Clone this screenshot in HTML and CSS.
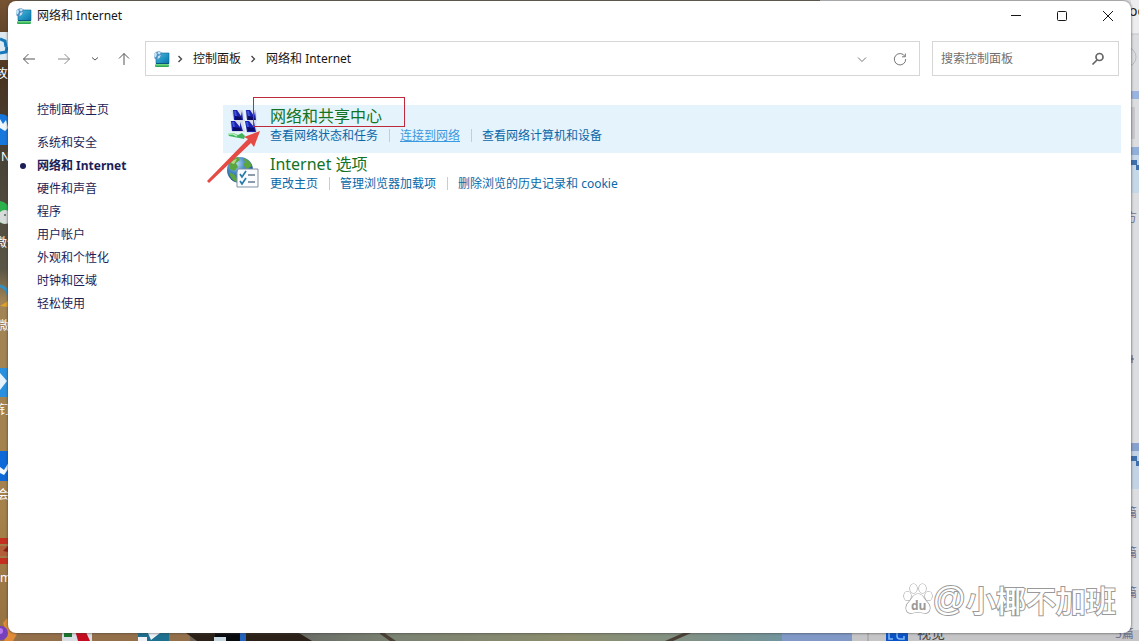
FILE: index.html
```html
<!DOCTYPE html>
<html lang="zh-CN">
<head>
<meta charset="utf-8">
<title>网络和 Internet</title>
<link rel="stylesheet" href="styles.css">
</head>
<body>
<svg class="defs" width="0" height="0" aria-hidden="true">
  <defs>
    <linearGradient id="screen" x1="0" y1="0" x2="1" y2="1"><stop offset="0" stop-color="#45bfdd"/><stop offset="1" stop-color="#0873ae"/></linearGradient>
    <linearGradient id="base" x1="0" y1="0" x2="0" y2="1"><stop offset="0" stop-color="#7ee28f"/><stop offset="1" stop-color="#1d9c45"/></linearGradient>
    <symbol id="net" viewBox="0 0 16 16">
      <rect x="1" y="13" width="14" height="3" rx="1" fill="url(#base)"/>
      <path d="M2 2h13v10.500H2z" fill="url(#screen)" stroke="#0b6796" stroke-width=".6"/>
      <path d="M2 12h13v1H2z" fill="#0b567e"/>
      <path d="M0 3Q2-.5 6 .5L8 2 7 6 3.500 9 .5 7.500z" fill="#4d8fc4"/>
      <path d="M0 3L2 1l1 2.500L2 6 .5 6.500zM4 .5l3 1-1.500 2-2-1zM4 5l3-1-1.500 3-2 1z" fill="#c4e3f4"/>
    </symbol>
  </defs>
</svg>

<svg class="wallpaper" viewBox="0 0 1139 641" preserveAspectRatio="none" aria-hidden="true">
  <defs>
    <linearGradient id="left" x1="0" y1="0" x2="0" y2="1"><stop offset="0" stop-color="#765332"/><stop offset=".12" stop-color="#49331f"/><stop offset=".26" stop-color="#4a4438"/><stop offset=".42" stop-color="#5a5645"/><stop offset=".47" stop-color="#a18455"/><stop offset=".8" stop-color="#a5814b"/><stop offset="1" stop-color="#95713f"/></linearGradient>
    <linearGradient id="bottom" x1="0" y1="0" x2="1" y2="0"><stop offset="0" stop-color="#686b65"/><stop offset=".2" stop-color="#7a8272"/><stop offset=".55" stop-color="#8c8d6d"/><stop offset=".8" stop-color="#809187"/><stop offset="1" stop-color="#7095a0"/></linearGradient>
  </defs>
  <rect width="1139" height="641" fill="#6e6455"/>
  <rect width="20" height="641" fill="url(#left)"/>
  <rect x="820" width="319" height="641" fill="#dcdde0"/>
  <rect x="0" y="628" width="190" height="13" fill="#94704a"/>
  <path d="M182 630h125l14 11H197z" fill="#2c2118"/>
  <path d="M294 630h500v11H312z" fill="url(#bottom)"/>
  <path d="M380 630l16 11h-6l-10-7zM698 630l-25 11h-8l25-11z" fill="#493f35"/>
  <path d="M62 630h30v11H62z" fill="#dadde4"/><path d="M64 630h8v7h-8z" fill="#17782d"/><path d="M75 630h10l5 11H78z" fill="#c60c20"/>
  <path d="M138 630h31v11h-31z" fill="#1d7090"/><path d="M138 637h9v4h-9zM148 633h12l-9 7z" fill="#eef2f7"/>
  <path d="M215 630h25v11h-25z" fill="#080b0e"/><path d="M214 637h12v4h-12z" fill="#c7d7e0"/><path d="M240 630h6v11h-6z" fill="#2263bd"/>
  <rect x="782" y="630" width="70" height="11" fill="#8199c7"/>
  <rect x="852" y="630" width="287" height="11" fill="#c5c5c7"/><path d="M868 630v11" stroke="#999"/>
  <rect x="886" y="630" width="22" height="11" fill="#0a54c8"/><path d="M889 633v6h4M897 633v3q0 3 3 3h4v-3" fill="none" stroke="#83b6f4" stroke-width="1.500"/>

  <rect y="32" width="9" height="28" fill="#dce9f1"/><path d="M0 39l5 2 1 6M0 53l6-1 1-5" fill="none" stroke="#1478bd" stroke-width="3"/>
  <path d="M0 114q9 0 9 7v24H0z" fill="#1677dd"/><path d="M0 119l3 5 3-4 2 8-3 3-5-3z" fill="#eef6fc"/>
  <circle cx="-1" cy="212" r="11" fill="#2cb34e"/><circle cx="5" cy="217" r="7" fill="#d7dcda"/><circle cx="5" cy="215" r="1" fill="#516358"/>
  <path d="M0 286q9 2 9 15" fill="none" stroke="#3490c2" stroke-width="3"/><path d="M0 306l8-5v6z" fill="#e0a22c"/>
  <rect y="368" width="9" height="29" fill="#2890df"/><path d="M0 373l7 8-7 9z" fill="#e6f3fd"/>
  <rect y="451" width="9" height="30" fill="#0d68d8"/><path d="M0 467l4 3 5-8v6l-5 7-4-2z" fill="#f2f8ff"/>
  <path d="M0 538h9v6H0zM0 558h9v6H0z" fill="#c52f20"/><path d="M0 546h9v10H0z" fill="#b35d38"/><path d="M3 551l5-5v6z" fill="#8e1c13"/>
  <path d="M3 623l4-5 5 12-5 4zM8 631l9 3-4 7H4z" fill="#df8b38"/><circle cx="1" cy="633" r="7" fill="#7640bd"/><circle cx="0" cy="631" r="3" fill="#b779ed"/>

  <rect x="1131" y="0" width="8" height="34" fill="#ededef"/><path d="M1131 34h8" stroke="#c5c5c7"/>
  <circle cx="1126" cy="57" r="10" fill="none" stroke="#b9bbc0"/>
  <rect x="1131" y="91" width="8" height="8" fill="#99b5df"/><path d="M1131 107h4v32h-4z" fill="#c8c8ce"/>
  <rect x="1131" y="147" width="8" height="8" fill="#91afd8"/><rect x="1131" y="155" width="8" height="38" fill="#c6d7e8"/><path d="M1131 160h6v5h3v5h-4v-5h-5z" fill="#3f6fac"/>
  <rect x="1131" y="443" width="8" height="8" fill="#87a2cf"/><rect x="1131" y="451" width="8" height="38" fill="#c3d3e5"/><path d="M1131 456h6v5h3v5h-4v-5h-5z" fill="#3f6fac"/>
  <path d="M1131 359h3M1132 355v8" stroke="#4c587c"/>
  <g class="desk-label"><text x="-4" y="78">攻</text><text x="1" y="161">N</text><text x="-5" y="247">微信</text><text x="-3" y="330">微</text><text x="-1" y="414">钉</text><text x="-3" y="499">会</text><text x="0" y="582">m</text></g>
  <g class="page-label"><text x="1125" y="222">方</text><text x="1125" y="517">篇</text><text x="1125" y="557">篇</text><text x="1125" y="597">篇</text><text x="1115" y="638">5篇</text></g>
  <text class="page-big" x="1129" y="16">oc</text><text class="page-view" x="917" y="638">视觉</text>
</svg>

<div class="window">
  <header class="titlebar">
    <svg class="app-icon"><use href="#net"/></svg>
    <h1>网络和 Internet</h1>
    <div class="caption-buttons">
      <button aria-label="最小化"><svg viewBox="0 0 12 12"><path d="M1 5.500h10"/></svg></button>
      <button aria-label="最大化"><svg viewBox="0 0 12 12"><rect x="1.500" y="1.500" width="9" height="9" rx="1"/></svg></button>
      <button aria-label="关闭"><svg viewBox="0 0 12 12"><path d="M1 1l10 10M11 1L1 11"/></svg></button>
    </div>
  </header>

  <div class="toolbar">
    <nav class="history" aria-label="导航">
      <button aria-label="后退"><svg viewBox="0 0 14 14"><path d="M13 7H1.500M6.500 2l-5 5 5 5"/></svg></button>
      <button class="dim" aria-label="前进"><svg viewBox="0 0 14 14"><path d="M1 7h11.500M7.500 2l5 5-5 5"/></svg></button>
      <button class="recent" aria-label="最近位置"><svg viewBox="0 0 14 14"><path d="M4 5.500l3 2.500 3-2.500"/></svg></button>
      <button aria-label="上移"><svg viewBox="0 0 14 14"><path d="M7 13V1.500M2 6.500l5-5 5 5"/></svg></button>
    </nav>
    <div class="address">
      <svg class="app-icon"><use href="#net"/></svg>
      <svg class="crumb-arrow" viewBox="0 0 6 8"><path d="M1.500 1l3 3-3 3"/></svg>
      <a href="#panel">控制面板</a>
      <svg class="crumb-arrow" viewBox="0 0 6 8"><path d="M1.500 1l3 3-3 3"/></svg>
      <a href="#network">网络和 Internet</a>
      <div class="address-actions">
        <button aria-label="展开"><svg viewBox="0 0 14 14"><path d="M3 5.500l4 4 4-4"/></svg></button>
        <button aria-label="刷新"><svg viewBox="0 0 14 14"><path d="M12 4.500A5.700 5.700 0 1 0 12.700 7M12.300 1.500v3.300H9"/></svg></button>
      </div>
    </div>
    <form class="search">
      <input type="search" aria-label="搜索控制面板" placeholder="搜索控制面板">
      <button type="button" aria-label="搜索"><svg viewBox="0 0 14 14"><circle cx="8.500" cy="5" r="3.500"/><path d="M6 8l-4.500 4.500"/></svg></button>
    </form>
  </div>

  <div class="body">
    <nav class="sidebar" aria-label="类别">
      <a class="home" href="#panel">控制面板主页</a>
      <a href="#system">系统和安全</a>
      <a class="current" href="#network" aria-current="page">网络和 Internet</a>
      <a href="#hardware">硬件和声音</a>
      <a href="#programs">程序</a>
      <a href="#users">用户帐户</a>
      <a href="#appearance">外观和个性化</a>
      <a href="#clock">时钟和区域</a>
      <a href="#access">轻松使用</a>
    </nav>
    <main class="content">
      <section class="category active">
        <svg class="category-icon" viewBox="0 0 34 34" aria-hidden="true">
          <path d="M5 3h12l2 11H8zM19 3h11l1 11H21zM4 14h13l2 11H6zM19 14h11l1 12H21z" fill="#d5dbe8"/>
          <path d="M7 3l4 0 4 6 1-5 1 9H8zM20 3l4 0 4 6 1-5 1 9h-9zM5 14l4 0 5 6 0-5 3 9H6zM19 14l4 0 5 6 0-5 2 10h-9z" fill="#1c20ae"/>
          <path d="M9 9l6 1 1 3H9zM22 9l6 1 1 3h-7zM7 20l7 1 2 3H7zM21 20l7 1 1 3h-7z" fill="#0a0b62"/>
          <path d="M8 4l2 0 1 5-2 0zM21 4l2 0 1 5-2 0zM6 15l2 0 1 5-2 0zM20 15l2 0 1 5-2 0z" fill="#3956d8"/>
          <path d="M2 27l5-1 5 2 4-2 3 3-1 3-5-1-5-1-5-1z" fill="#3fb45b"/><path d="M2 27l5 0 4 2" stroke="#b5edbb" stroke-width="1.500" fill="none"/>
        </svg>
        <div>
          <h2><a href="#center">网络和共享中心</a></h2>
          <ul class="tasks"><li><a href="#status">查看网络状态和任务</a></li><li><a class="hover" href="#connect">连接到网络</a></li><li><a href="#devices">查看网络计算机和设备</a></li></ul>
        </div>
      </section>
      <section class="category">
        <svg class="category-icon" viewBox="0 0 34 34" aria-hidden="true">
          <defs><radialGradient id="globe" cx=".35" cy=".25" r=".8"><stop offset="0" stop-color="#b8dcf4"/><stop offset=".45" stop-color="#4587c5"/><stop offset="1" stop-color="#123f7b"/></radialGradient></defs>
          <circle cx="14" cy="15" r="13" fill="url(#globe)"/>
          <path d="M3 9q3-6 9-7l2 3-4 3 2 4-4 4-4-2zM17 3q7 2 9 8l-5 3-4-4 2-3zM3 17l6 3 3 6-2 1q-6-3-7-10z" fill="#5ba640"/>
          <path d="M5 8q3-4 6-4l-3 5z" fill="#b4da82"/>
          <path d="M12 14h20v18H11V17z" fill="#fafcff" stroke="#8192a5"/>
          <path d="M22 20h7M22 27h7" stroke="#687a91" stroke-width="1.500"/>
          <path d="M14 19l2 3 4-6M14 26l2 3 4-6" fill="none" stroke="#277ba7" stroke-width="1.700"/>
        </svg>
        <div>
          <h2><a href="#options">Internet 选项</a></h2>
          <ul class="tasks"><li><a href="#homepage">更改主页</a></li><li><a href="#addons">管理浏览器加载项</a></li><li><a href="#history">删除浏览的历史记录和 cookie</a></li></ul>
        </div>
      </section>
    </main>
  </div>
  <div class="highlight-box"></div>
  <svg class="highlight-arrow" viewBox="0 0 56 56" aria-hidden="true"><path d="M1 52L42 10 38 8 54 2 48 18 45 14 3 54z" fill="#e64a45"/></svg>
  <div class="watermark">
    <svg viewBox="0 0 30 32" aria-hidden="true"><g fill="#fff" stroke="#999" stroke-width="1.200"><ellipse cx="4.500" cy="13" rx="3.500" ry="4.500"/><ellipse cx="10.500" cy="5.500" rx="3.500" ry="4.500"/><ellipse cx="19.500" cy="5.500" rx="3.500" ry="4.500"/><ellipse cx="25.500" cy="13" rx="3.500" ry="4.500"/><path d="M15 11c5 0 6 5 9 8 5 5 3 12-3 11-4-1-8-1-12 0-6 1-8-6-3-11 3-3 4-8 9-8z"/></g><text x="8" y="27">du</text></svg>
    <span class="at">@</span><span>小椰不加班</span>
  </div>
</div>
</body>
</html>
```
FILE: styles.css
```css
* { box-sizing: border-box; }

body {
  margin: 0;
  min-height: 100vh;
  padding: 1px 8px 8px;
  display: flex;
  position: relative;
  overflow: hidden;
  font: 12px/16px "Noto Sans", "Noto Sans CJK SC", sans-serif;
  color: #161616;
}

a { color: inherit; text-decoration: none; }
h1, h2, ul { margin: 0; padding: 0; font-size: inherit; font-weight: 400; }
button { border: 0; padding: 0; background: none; color: inherit; display: grid; place-items: center; }
button svg { width: 14px; height: 14px; fill: none; stroke: currentColor; }

.defs { position: absolute; }
.wallpaper { position: absolute; inset: 0; width: 100%; height: 100%; }
.desk-label { font-size: 12px; fill: #fff; }
.page-label { font-size: 12px; fill: #6c7390; }
.page-big { font-size: 14px; fill: #222; }
.page-view { font-size: 14px; fill: #444; }

.window {
  position: relative;
  flex: 1;
  min-width: 0;
  display: flex;
  flex-direction: column;
  background: #fff;
  border-radius: 8px;
  box-shadow: 0 0 2px 1px rgba(60, 60, 60, .45);
}

.titlebar { display: flex; align-items: center; height: 30px; padding-left: 8px; gap: 5px; }
.app-icon { width: 16px; height: 16px; flex: none; }
.caption-buttons { display: flex; margin-left: auto; }
.caption-buttons button { width: 46px; height: 28px; }
.caption-buttons svg { width: 12px; height: 12px; }

.toolbar { display: flex; align-items: stretch; margin-top: 10px; padding: 0 12px 0 8px; height: 35px; }
.history { display: flex; align-items: center; width: 129px; gap: 10px; padding-left: 6px; color: #555; }
.history button { width: 14px; height: 24px; }
.history button + button { margin-left: 11px; }
.history .recent { margin-left: 7px; }
.history .recent + button { margin-left: 5px; }
.history .dim { color: #8a8a8a; }
.address, .search { display: flex; align-items: center; border: 1px solid #d6d6d6; }
.address { flex: 1; padding: 0 8px; }
.crumb-arrow { width: 6px; height: 8px; margin: 0 10px 0 7px; fill: none; stroke: #444; stroke-width: 1.3; }
.address a + .crumb-arrow { margin-left: 9px; }
.address-actions { display: flex; gap: 16px; margin-left: auto; color: #777; }
.address-actions button { width: 22px; height: 24px; }
.search { width: 187px; margin-left: 12px; padding: 0 13px 0 8px; }
.search input { flex: 1; min-width: 0; border: 0; padding: 0; outline: 0; background: none; font: inherit; color: #222; }
.search input::placeholder { color: #6f6f6f; opacity: 1; }
.search button { color: #666; }
.search button svg { stroke-width: 1.7; }

.body { display: flex; flex: 1; padding: 22px 10px 0 29px; }
.sidebar { width: 186px; flex: none; display: flex; flex-direction: column; align-items: flex-start; color: #1b1e57; }
.sidebar a { line-height: 23px; }
.sidebar .home { margin-bottom: 10px; }
.sidebar .current { position: relative; font-weight: 700; }
.sidebar .current::before {
  content: "";
  position: absolute;
  left: -17px;
  top: 9px;
  width: 6px;
  height: 6px;
  border-radius: 50%;
  background: #1b1e57;
}

.content { flex: 1; min-width: 0; padding-top: 7px; }
.category { display: flex; gap: 10px; height: 48px; padding-left: 3px; }
.category.active { background: #e5f3fc; }
.category-icon { width: 34px; height: 34px; margin-top: 2px; flex: none; }
.category h2 { font-size: 16px; line-height: 22px; color: #127325; }
.tasks { display: flex; list-style: none; color: #0a67a8; line-height: 18px; }
.tasks li + li { margin-left: 11px; padding-left: 11px; background: linear-gradient(#c4ced8, #c4ced8) 0 2px / 1px 13px no-repeat; }
.tasks .hover { color: #3b9ade; text-decoration: underline; }

.highlight-box { position: absolute; left: 245px; top: 96px; width: 152px; height: 30px; border: 1px solid #bd2b3b; }
.highlight-arrow { position: absolute; left: 198px; top: 128px; width: 56px; height: 56px; }

.watermark {
  position: absolute;
  right: 15px;
  bottom: 14px;
  display: flex;
  align-items: center;
  font: 500 30px/40px "Noto Sans CJK SC", sans-serif;
  color: #fff;
  -webkit-text-stroke: 2px #999;
  paint-order: stroke fill;
}
.watermark svg { width: 30px; height: 32px; }
.watermark text { font: 700 12px "Open Sans", sans-serif; fill: #999; -webkit-text-stroke: 0; }
.watermark .at { font-family: "Liberation Sans", sans-serif; font-size: 33px; }
```
